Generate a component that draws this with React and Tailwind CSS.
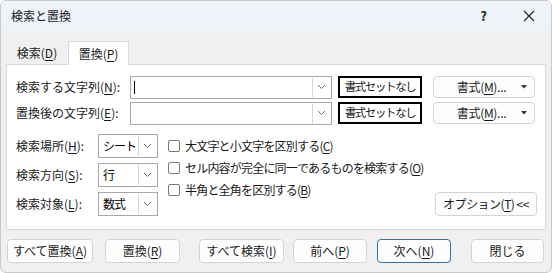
const font = { fontFamily: '"Noto Sans CJK JP", "Noto Sans", sans-serif' };

const U = ({ children }) => <span className="underline underline-offset-2">{children}</span>;

const Chevron = () => (
  <svg width="9" height="6" viewBox="0 0 9 6" fill="none">
    <path d="M1 1l3.5 3.5L8 1" stroke="#6b6b6b" strokeWidth="1" />
  </svg>
);

const Combo = ({ value, className }) => (
  <div className={`flex h-[23px] border border-[#a8a8a8] bg-white ${className}`}>
    <div className="flex-1 flex items-center pl-[4px] text-[12px] text-black whitespace-nowrap tracking-[-1px] overflow-hidden">{value}</div>
    <div className="w-[18px] m-[1px] border-l border-[#d6d6d6] flex items-center justify-center shrink-0">
      <Chevron />
    </div>
  </div>
);

const Check = ({ children }) => (
  <label className="flex items-center gap-[5px] text-[12px] text-[#1a1a1a] h-[22px] whitespace-nowrap tracking-[-0.8px]">
    <span className="w-[12px] h-[12px] border border-[#777] rounded-[2px] bg-white shrink-0" />
    <span>{children}</span>
  </label>
);

const Btn = ({ children, focused, className = '' }) => (
  <button
    className={`h-[24px] rounded-[4px] bg-[#fdfdfd] text-[12px] text-[#1a1a1a] flex items-center justify-center whitespace-nowrap ${
      focused ? 'border border-[#2f6fae]' : 'border border-[#d3d3d3]'
    } ${className}`}
  >
    {children}
  </button>
);

export default function App() {
  return (
    <div className="w-[552px] h-[273px] bg-[#f0f0f0] flex flex-col rounded-[6px] border border-[#c8c8c8] overflow-hidden" style={font}>
      {/* title bar */}
      <div className="h-[30px] bg-[#eef2f9] flex items-center pl-[10px] pr-[14px] shrink-0">
        <span className="text-[12px] text-[#1a1a1a]">検索と置換</span>
        <span className="ml-auto text-[13px] font-bold text-[#222] mr-[36px]">?</span>
        <svg width="12" height="12" viewBox="0 0 12 12" className="mr-[2px]">
          <path d="M1 1l10 10M11 1L1 11" stroke="#222" strokeWidth="1.1" />
        </svg>
      </div>

      {/* tabs */}
      <div className="flex items-end px-[5px] pt-[8px] h-[33px] shrink-0">
        <div className="w-[62px] h-[22px] flex items-center justify-center text-[12px] text-[#1a1a1a]">
          検索(<U>D</U>)
        </div>
        <div className="w-[61px] h-[24px] bg-white border border-b-0 border-[#d9d9d9] flex items-center justify-center text-[12px] text-[#1a1a1a] -mb-px relative z-10">
          置換(<U>P</U>)
        </div>
      </div>

      {/* panel */}
      <div className="mx-[5px] h-[166px] bg-white border border-[#d9d9d9] pl-[9px] pr-[8px] pt-[11px] shrink-0">
        <div className="flex flex-col gap-[4px]">
          {[['検索する文字列(', 'N', '):', true], ['置換後の文字列(', 'E', '):', false]].map(([a, k, b, cur]) => (
            <div key={k} className="flex items-center h-[22px]">
              <span className="w-[114px] text-[12px] text-[#1a1a1a] whitespace-nowrap">
                {a}<U>{k}</U>{b}
              </span>
              <div className="flex h-[23px] w-[202px] border border-[#a8a8a8] bg-white">
                <div className="flex-1 flex items-center pl-[3px]">
                  {cur && <span className="w-px h-[13px] bg-black" />}
                </div>
                <div className="w-[18px] m-[1px] border-l border-[#d6d6d6] flex items-center justify-center">
                  <Chevron />
                </div>
              </div>
              <div className="ml-[6px] w-[84px] h-[22px] border-2 border-black flex items-center justify-center text-[11.5px] text-[#1a1a1a] tracking-[-1.4px] whitespace-nowrap">
                書式セットなし
              </div>
              <div className="ml-[11px] w-[102px] h-[22px] border border-[#d3d3d3] rounded-[4px] bg-[#fdfdfd] flex items-center text-[12px] text-[#1a1a1a] whitespace-nowrap">
                <span className="flex-1 text-center pl-[8px] tracking-[-0.3px]">
                  書式(<U>M</U>)...
                </span>
                <svg width="6" height="4" viewBox="0 0 6 4" className="mr-[7px] shrink-0">
                  <path d="M0 0h6L3 3.5z" fill="#333" />
                </svg>
              </div>
            </div>
          ))}
        </div>

        <div className="flex mt-[10px]">
          <div className="flex flex-col gap-[5px] shrink-0">
            {[['検索場所(', 'H', '):', 'シート'], ['検索方向(', 'S', '):', '行'], ['検索対象(', 'L', '):', '数式']].map(([a, k, b, v]) => (
              <div key={k} className="flex items-center">
                <span className="w-[82px] text-[12px] text-[#1a1a1a] whitespace-nowrap">
                  {a}<U>{k}</U>{b}
                </span>
                <Combo value={v} className="w-[60px] h-[24px]" />
              </div>
            ))}
          </div>
          <div className="flex flex-col ml-[10px] mt-[1px] shrink-0">
            <Check>大文字と小文字を区別する(<U>C</U>)</Check>
            <Check>セル内容が完全に同一であるものを検索する(<U>O</U>)</Check>
            <Check>半角と全角を区別する(<U>B</U>)</Check>
          </div>
          <div className="ml-auto flex items-end">
            <Btn className="w-[102px] h-[24px] tracking-[-0.5px]">
              オプション(<U>T</U>) &lt;&lt;
            </Btn>
          </div>
        </div>
      </div>

      {/* bottom buttons */}
      <div className="flex items-center pl-[6px] pt-[9px]">
        <Btn className="w-[86px]">すべて置換(<U>A</U>)</Btn>
        <Btn className="w-[75px] ml-[12px]">置換(<U>R</U>)</Btn>
        <Btn className="w-[85px] ml-[19px]">すべて検索(<U>I</U>)</Btn>
        <Btn className="w-[74px] ml-[9px]">前へ(<U>P</U>)</Btn>
        <Btn focused className="w-[74px] ml-[10px]">次へ(<U>N</U>)</Btn>
        <Btn className="w-[73px] ml-[20px]">閉じる</Btn>
      </div>
    </div>
  );
}
